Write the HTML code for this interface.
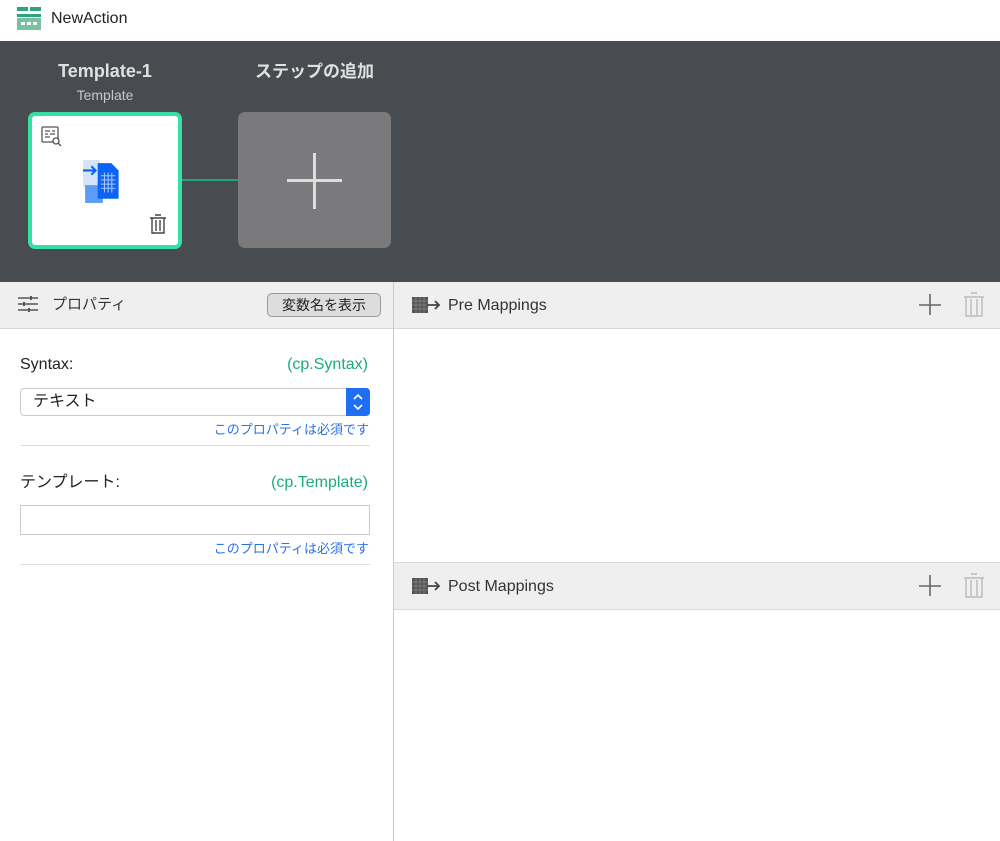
<!DOCTYPE html>
<html><head><meta charset="utf-8"><style>
*{box-sizing:border-box;margin:0;padding:0}
body{width:1000px;height:841px;overflow:hidden;background:#fff;font-family:"Liberation Sans","Noto Sans CJK JP",sans-serif;position:relative}
.a{position:absolute;line-height:20px}
</style></head><body>
<div class="a" style="left:0;top:0;width:1000px;height:41px;background:#fff">
<svg class="a" style="left:17px;top:7px" width="24" height="23" viewBox="0 0 24 23"><rect x="0" y="0" width="11" height="4" fill="#2fa37a"/><rect x="13" y="0" width="11" height="4" fill="#2fa37a"/><rect x="0" y="7" width="24" height="3" fill="#2fa37a"/><rect x="0" y="11" width="24" height="12" fill="#76c2a3"/><rect x="4" y="15" width="4" height="3" fill="#fff"/><rect x="10" y="15" width="4" height="3" fill="#fff"/><rect x="16" y="15" width="4" height="3" fill="#fff"/></svg>
<div class="a" style="left:51px;top:9px;font-size:16px;color:#222">NewAction</div>
</div>
<div class="a" style="left:0;top:41px;width:1000px;height:241px;background:#484b50">
<div class="a" style="left:30px;top:20px;width:150px;text-align:center;color:#e0e0e0;font-size:18px;font-weight:bold">Template-1</div>
<div class="a" style="left:30px;top:44px;width:150px;text-align:center;color:#c8c8c8;font-size:14px">Template</div>
<div class="a" style="left:238px;top:21px;width:153px;text-align:center;color:#e0e0e0;font-size:17px;font-weight:bold">ステップの追加</div>
<div class="a" style="left:180px;top:138px;width:58px;height:2px;background:#1fa377"></div>
<div class="a" style="left:28px;top:71px;width:154px;height:137px;border:4px solid #35e0a5;border-radius:7px;background:#fff">
<svg class="a" style="left:9px;top:10px" width="22" height="22" viewBox="0 0 22 22" fill="none" stroke="#555" stroke-width="1.3"><rect x="1" y="1" width="16" height="15" rx="1"/><path d="M4 5h5M11 5h3M4 8h3M9 8h5M4 11h5"/><circle cx="15" cy="15" r="3" fill="#fff"/><path d="M17 17l3 3"/></svg>
<svg class="a" style="left:51px;top:44px" width="44" height="44" viewBox="0 0 42 42"><rect x="0" y="0" width="16" height="26" fill="#d5e3fb"/><rect x="2" y="24" width="17" height="17" fill="#5b9cf7"/><path d="M14 3h13l7 7v27H14z" fill="#0d63f4"/><path d="M0 10h11M8 6l4 4-4 4" stroke="#0d63f4" stroke-width="2" fill="none"/><g stroke="#a9c8fc" stroke-width="1"><path d="M17 15h14M17 19h14M17 23h14M17 27h14M20.5 12v19M24 12v19M27.5 12v19"/></g></svg>
<svg class="a" style="left:117px;top:98px" width="18" height="20" viewBox="0 0 18 20" fill="none" stroke="#444" stroke-width="1.4"><path d="M1 4h16M6 1h6M3 4v15h12V4M7 6v11M11 6v11"/></svg>
</div>
<div class="a" style="left:238px;top:71px;width:153px;height:136px;background:#7a7a7c;border-radius:7px">
<div class="a" style="left:49px;top:67px;width:55px;height:3px;background:#ddd"></div>
<div class="a" style="left:75px;top:41px;width:3px;height:56px;background:#ddd"></div>
</div>
</div>
<div class="a" style="left:0;top:282px;width:393px;height:47px;background:#efefef;border-bottom:1px solid #d8d8d8"></div>
<svg class="a" style="left:18px;top:296px" width="20" height="16" viewBox="0 0 20 16" stroke="#555" stroke-width="1.6"><path d="M0 2h20M0 8h20M0 14h20"/><path d="M13 0v4M6 6v4M11 12v4" stroke-width="2"/></svg>
<div class="a" style="left:52px;top:295px;font-size:15px;color:#333">プロパティ</div>
<div class="a" style="left:267px;top:293px;width:114px;height:24px;border:1px solid #999;border-radius:5px;background:#ddd;font-size:14px;color:#222;text-align:center;line-height:22px">変数名を表示</div>
<div class="a" style="left:20px;top:355px;font-size:16px;color:#222">Syntax:</div>
<div class="a" style="right:632px;top:355px;font-size:16px;color:#1aab7f">(cp.Syntax)</div>
<div class="a" style="left:20px;top:388px;width:350px;height:28px;border:1px solid #ccc;border-radius:4px;background:#fff;font-size:16px;color:#222;padding:3px 12px;line-height:20px">テキスト</div>
<div class="a" style="left:346px;top:388px;width:24px;height:28px;background:#1f6ff5;border-radius:0 4px 4px 0"><svg width="24" height="28" viewBox="0 0 24 28" fill="none" stroke="#fff" stroke-width="1.6"><path d="M8 11l4-4 4 4M8 17l4 4 4-4"/></svg></div>
<div class="a" style="right:631px;top:420px;font-size:13px;color:#2a72ee">このプロパティは必須です</div>
<div class="a" style="left:20px;top:445px;width:350px;height:1px;background:#ddd"></div>
<div class="a" style="left:20px;top:473px;font-size:16px;color:#222">テンプレート:</div>
<div class="a" style="right:632px;top:473px;font-size:16px;color:#1aab7f">(cp.Template)</div>
<div class="a" style="left:20px;top:505px;width:350px;height:30px;border:1px solid #ccc;background:#fff"></div>
<div class="a" style="right:631px;top:539px;font-size:13px;color:#2a72ee">このプロパティは必須です</div>
<div class="a" style="left:20px;top:564px;width:350px;height:1px;background:#ddd"></div>
<div class="a" style="left:393px;top:282px;width:1px;height:559px;background:#ccc"></div>
<div class="a" style="left:394px;top:282px;width:606px;height:47px;background:#efefef;border-bottom:1px solid #d8d8d8"></div>
<div class="a" style="left:394px;top:562px;width:606px;height:48px;background:#efefef;border-top:1px solid #d8d8d8;border-bottom:1px solid #d8d8d8"></div>
<svg class="a" style="left:412px;top:297px" width="30" height="16" viewBox="0 0 30 16"><rect x="0" y="0" width="16" height="16" fill="#555"/><path d="M4 0v16M8 0v16M12 0v16M0 4h16M0 8h16M0 12h16" stroke="#888" stroke-width=".7"/><path d="M15 8h12M23 4l4 4-4 4" stroke="#444" stroke-width="1.8" fill="none"/></svg>
<div class="a" style="left:448px;top:296px;font-size:16px;color:#333">Pre Mappings</div>
<svg class="a" style="left:412px;top:578px" width="30" height="16" viewBox="0 0 30 16"><rect x="0" y="0" width="16" height="16" fill="#555"/><path d="M4 0v16M8 0v16M12 0v16M0 4h16M0 8h16M0 12h16" stroke="#888" stroke-width=".7"/><path d="M15 8h12M23 4l4 4-4 4" stroke="#444" stroke-width="1.8" fill="none"/></svg>
<div class="a" style="left:448px;top:577px;font-size:16px;color:#333">Post Mappings</div>
<svg class="a" style="left:918px;top:293px" width="24" height="24" viewBox="0 0 24 24" stroke="#666" stroke-width="1.6"><path d="M12 1v21M1 12h22"/></svg>
<svg class="a" style="left:963px;top:292px" width="22" height="26" viewBox="0 0 22 26" fill="none" stroke="#bbb" stroke-width="1.4"><path d="M8 1h6M1 5h20M3 5v19h16V5M8 7v16M14 7v16"/></svg>
<svg class="a" style="left:918px;top:574px" width="24" height="24" viewBox="0 0 24 24" stroke="#666" stroke-width="1.6"><path d="M12 1v21M1 12h22"/></svg>
<svg class="a" style="left:963px;top:573px" width="22" height="26" viewBox="0 0 22 26" fill="none" stroke="#bbb" stroke-width="1.4"><path d="M8 1h6M1 5h20M3 5v19h16V5M8 7v16M14 7v16"/></svg>
</body></html>
